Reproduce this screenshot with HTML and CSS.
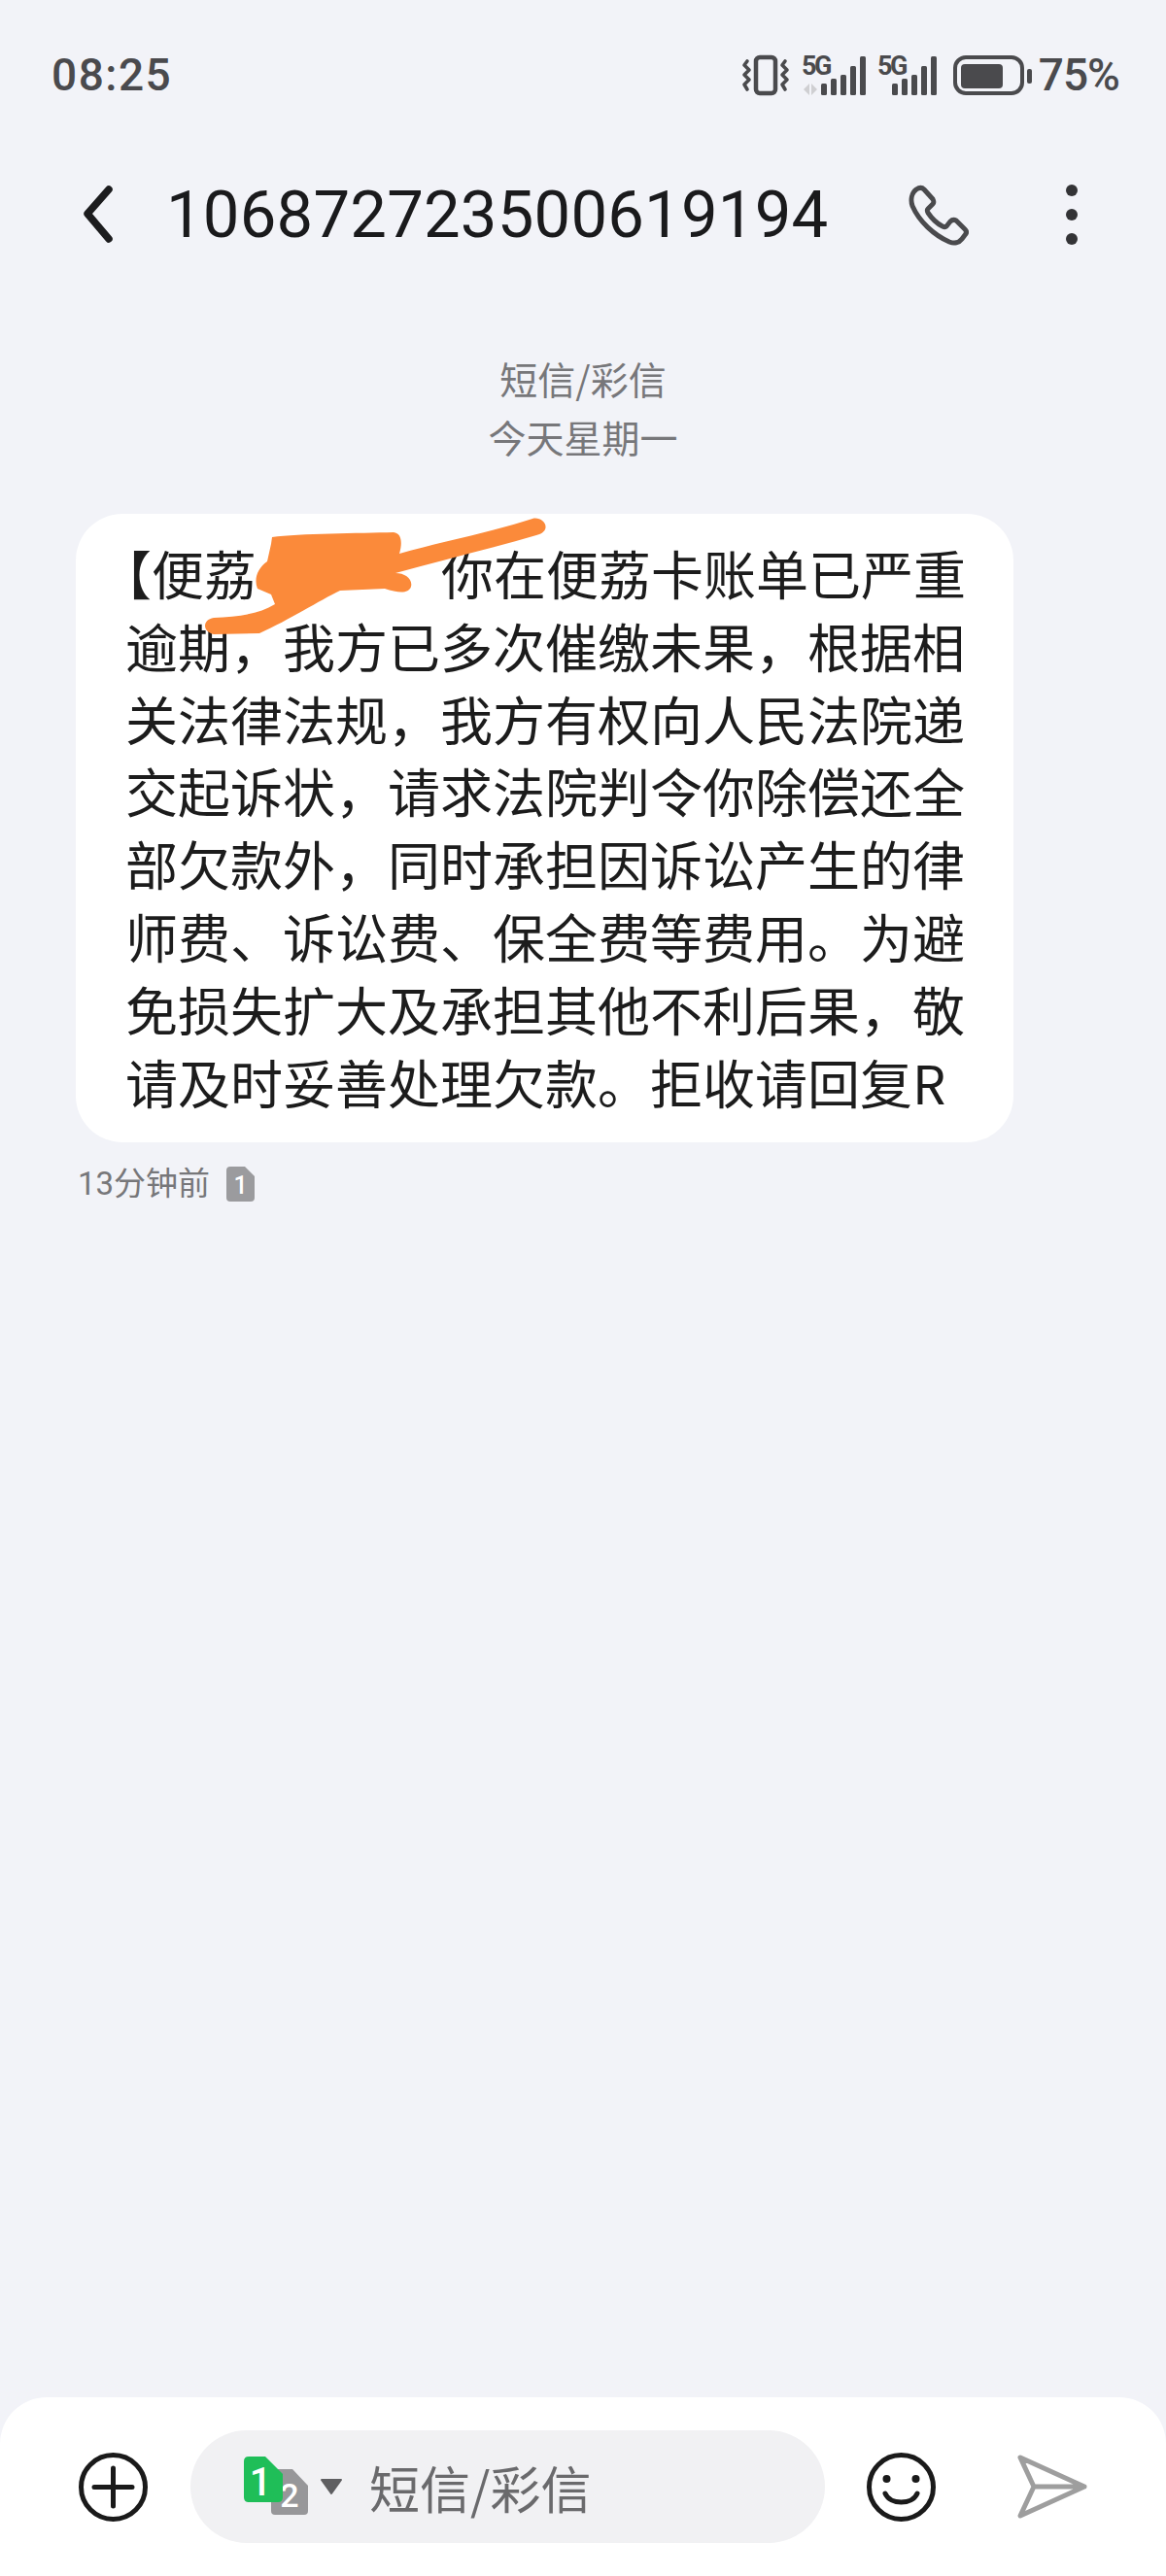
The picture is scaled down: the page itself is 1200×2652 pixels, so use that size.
FILE: index.html
```html
<!DOCTYPE html>
<html lang="zh-CN">
<head>
    <meta charset="UTF-8">
    <meta name="viewport" content="width=device-width, initial-scale=1.0">
    <title>短信</title>
    <link rel="stylesheet" href="styles.css">
</head>
<body>

    <!-- Status bar -->
    <div class="status-bar">
        <span class="clock">08:25</span>
        <div class="status-icons">
            <svg class="ic-vibrate" width="49" height="41" viewBox="0 0 49 41" fill="none" stroke="#4a4a4d" stroke-linecap="round" stroke-linejoin="round">
                <rect x="14" y="2" width="20" height="37" rx="4" stroke-width="4.5"/>
                <path d="M5 6 L2 10 L7 15 L2 20 L7 25 L2 30 L5 35" stroke-width="3.6"/>
                <path d="M44 6 L41 10 L46 15 L41 20 L46 25 L41 30 L44 35" stroke-width="3.6"/>
            </svg>
            <svg class="ic-signal" width="66" height="41" viewBox="0 0 66 41">
                <text class="net-label" x="0" y="20">5G</text>
                <path d="M8 29 L2 35 L8 41 Z M10 29 L16 35 L10 41 Z" fill="#cfcfd2"/>
                <rect x="20" y="29" width="6" height="12" rx="1.5" fill="#4a4a4d"/>
                <rect x="30" y="24" width="6" height="17" rx="1.5" fill="#4a4a4d"/>
                <rect x="40" y="20" width="6" height="21" rx="1.5" fill="#4a4a4d"/>
                <rect x="50" y="11" width="6" height="30" rx="1.5" fill="#4a4a4d"/>
                <rect x="60" y="1" width="6" height="40" rx="1.5" fill="#4a4a4d"/>
            </svg>
            <svg class="ic-signal-2" width="62" height="41" viewBox="0 0 62 41">
                <text class="net-label" x="0" y="20">5G</text>
                <rect x="15" y="29" width="6" height="12" rx="1.5" fill="#4a4a4d"/>
                <rect x="25" y="24" width="6" height="17" rx="1.5" fill="#4a4a4d"/>
                <rect x="35" y="20" width="6" height="21" rx="1.5" fill="#4a4a4d"/>
                <rect x="45" y="11" width="6" height="30" rx="1.5" fill="#4a4a4d"/>
                <rect x="55" y="1" width="6" height="40" rx="1.5" fill="#4a4a4d"/>
            </svg>
            <svg class="ic-battery" width="81" height="41" viewBox="0 0 81 41">
                <rect x="2" y="2" width="69" height="37" rx="11" fill="none" stroke="#4a4a4d" stroke-width="4"/>
                <rect x="8" y="9" width="43" height="25" rx="4" fill="#4a4a4d"/>
                <rect x="76" y="14" width="5" height="15" rx="2" fill="#4a4a4d"/>
            </svg>
            <span class="battery-text">75%</span>
        </div>
    </div>

    <!-- Header -->
    <div class="header">
        <svg class="back" width="34" height="60" viewBox="0 0 34 60" fill="none" stroke="#1c1c1e" stroke-width="7.5" stroke-linecap="round" stroke-linejoin="round">
            <path d="M28 4 L6 29 L28 55"/>
        </svg>
        <h1 class="title">106872723500619194</h1>
        <svg class="phone" width="62" height="63" viewBox="0 0 62 63" fill="none" stroke="#4a4a4d" stroke-width="5" stroke-linejoin="round">
            <path d="M8 5 C11 3 14 3 16 5 L25 15 C26 17 26 19 25 20 L20 25 C19 26 19 27 20 29 C24 35 29 40 35 43 C37 44 38 44 39 43 L43 38 C45 36 47 36 49 37 L58 46 C60 48 60 50 58 52 L55 56 C52 60 47 61 42 59 C26 52 11 38 4 22 C2 16 3 9 8 5 Z"/>
        </svg>
        <div class="more">
            <span class="dot"></span>
            <span class="dot"></span>
            <span class="dot"></span>
        </div>
    </div>

    <!-- Thread -->
    <div class="thread-label">
        <div>短信/彩信</div>
        <div>今天星期一</div>
    </div>

    <div class="bubble">
        <p class="bubble-text"><span class="open-bracket">【</span>便荔<span class="covered"></span><span>你在便荔卡账单已严重</span><span>逾期，我方已多次催缴未果，根据相关法律法规，我方有权向人民法院递交起诉状，请求法院判令你除偿还全部欠款外，同时承担因诉讼产生的律师费、诉讼费、保全费等费用。为避免损失扩大及承担其他不利后果，敬请及时妥善处理欠款。拒收请回复R</span></p>
        <!-- orange scribble over the sender name -->
        <svg class="scribble" width="390" height="130" viewBox="190 530 390 130">
            <path d="M280 553 C308 549 370 549 405 548 C414 549 414 560 411 570 C453 558 505 548 548 534 C559 531 570 546 552 551 C505 565 453 577 407 590 C417 590 425 596 423 604 C420 612 409 610 396 606 L350 608 C329 618 298 638 267 652 L220 653 C208 650 208 638 220 636 C246 635 267 632 283 622 L279 612 L265 606 C261 596 265 585 275 578 L279 560 Z" fill="#fb8a3a"/>
        </svg>
    </div>

    <div class="meta">
        <span>13分钟前</span>
        <svg width="29" height="36" viewBox="0 0 29 36">
            <path d="M4 0 H19 L29 10 V32 Q29 36 25 36 H4 Q0 36 0 32 V4 Q0 0 4 0 Z" fill="#9b9b9e"/>
            <text class="sim-num" x="14.5" y="28" font-size="25">1</text>
        </svg>
    </div>

    <div class="spacer"></div>

    <!-- Composer -->
    <div class="composer">
        <svg class="add" width="71" height="71" viewBox="0 0 71 71" fill="none" stroke="#1a1a1a" stroke-linecap="round">
            <circle cx="35.5" cy="35.5" r="33" stroke-width="5"/>
            <path d="M35.5 16 V55 M16 35.5 H55" stroke-width="5"/>
        </svg>
        <div class="input">
            <svg class="sim" width="66" height="60" viewBox="0 0 66 60">
                <path d="M28 13 H50 L66 30 V56 Q66 60 62 60 H32 Q28 60 28 56 Z" fill="#979799"/>
                <text class="sim-num" x="47" y="52" font-size="34">2</text>
                <path d="M5 0 H22 L40 18 V42 Q40 47 35 47 H5 Q0 47 0 42 V5 Q0 0 5 0 Z" fill="#1fbe58"/>
                <text class="sim-num" x="17" y="40" font-size="40">1</text>
            </svg>
            <svg class="caret" width="24" height="18" viewBox="0 0 24 18">
                <path d="M2 2 H22 L12 16 Z" fill="#5f5f61" stroke="#5f5f61" stroke-width="2" stroke-linejoin="round"/>
            </svg>
            <span class="placeholder">短信/彩信</span>
        </div>
        <svg class="emoji" width="71" height="71" viewBox="0 0 71 71" fill="none" stroke="#1a1a1a" stroke-linecap="round">
            <circle cx="35.5" cy="35.5" r="33" stroke-width="5"/>
            <circle cx="20.5" cy="27" r="4" fill="#1a1a1a" stroke="none"/>
            <circle cx="50.5" cy="27" r="4" fill="#1a1a1a" stroke="none"/>
            <path d="M19 42 C24 54 47 54 52 42" stroke-width="5"/>
        </svg>
        <svg class="send" width="72" height="66" viewBox="0 0 72 66" fill="none" stroke="#9e9e9e" stroke-width="5" stroke-linecap="round" stroke-linejoin="round">
            <path d="M3 3 L69 33 L3 63 L17 33 Z M17 33 H69"/>
        </svg>
    </div>

</body>
</html>
```

FILE: styles.css
```css
body {
    margin: 0;
    height: 2652px;
    display: flex;
    flex-direction: column;
    background-color: #f2f3f8;
    font-family: Roboto, "Noto Sans CJK SC", sans-serif;
    overflow: hidden;
}

/* Status bar */
.status-bar {
    height: 154px;
    padding: 0 48px 0 53px;
    display: flex;
    align-items: center;
    justify-content: space-between;
    color: #4a4a4d;
}

.clock {
    font-size: 46px;
    font-weight: 500;
    letter-spacing: 1.5px;
}

.status-icons {
    display: flex;
    align-items: center;
    gap: 12px;
}

.status-icons svg {
    overflow: visible;
}

.ic-battery {
    margin-left: 4px;
}

.battery-text {
    margin-left: -5px;
    font-size: 46px;
    font-weight: 500;
    letter-spacing: -1px;
}

.net-label {
    font-family: Roboto, sans-serif;
    font-size: 27px;
    font-weight: 700;
    letter-spacing: -2.5px;
    fill: #4a4a4d;
}

/* Header */
.header {
    height: 134px;
    padding-left: 84px;
    display: flex;
    align-items: center;
}

.title {
    flex: 1;
    margin: 0 0 0 53px;
    font-size: 67px;
    font-weight: 400;
    letter-spacing: 0.2px;
    color: #1a1a1c;
}

.phone {
    margin-right: 96px;
}

.more {
    width: 20px;
    margin-right: 87px;
    display: flex;
    flex-direction: column;
    align-items: center;
    gap: 13px;
}

.dot {
    width: 12px;
    height: 12px;
    border-radius: 50%;
    background-color: #333336;
}

/* Thread */
.thread-label {
    padding-top: 71px;
    font-family: "Noto Sans CJK SC", sans-serif;
    font-size: 39px;
    line-height: 60px;
    text-align: center;
    color: #77777a;
}

.bubble {
    position: relative;
    width: 965px;
    margin: 50px 0 0 78px;
    padding: 24px 44px 25px 51px;
    box-sizing: border-box;
    background-color: #fff;
    border-radius: 48px;
}

.bubble-text {
    margin: 0;
    font-family: "Noto Sans CJK SC", sans-serif;
    font-size: 54px;
    line-height: 74.8px;
    color: #1c1c1c;
}

.open-bracket {
    margin-left: -0.5em;
}

.covered {
    display: inline-block;
    width: 190px;
}

.scribble {
    position: absolute;
    left: 112px;
    top: 1px;
}

.meta {
    margin: 25px 0 0 80px;
    display: flex;
    align-items: center;
    gap: 17px;
    font-family: Roboto, "Noto Sans CJK SC", sans-serif;
    font-size: 33px;
    line-height: 36px;
    color: #77777a;
}

.sim-num {
    font-family: Roboto, sans-serif;
    font-weight: 500;
    text-anchor: middle;
    fill: #fff;
}

.spacer {
    flex: 1;
}

/* Composer */
.composer {
    height: 184px;
    padding: 34px 0 34px 81px;
    box-sizing: border-box;
    display: flex;
    align-items: center;
    background-color: #fff;
    border-radius: 48px 48px 0 0;
}

.input {
    width: 653px;
    height: 116px;
    margin-left: 44px;
    padding-left: 55px;
    box-sizing: border-box;
    display: flex;
    align-items: center;
    background-color: #f1f1f3;
    border-radius: 58px;
}

.sim {
    margin-top: -2px;
}

.caret {
    margin: 0 27px 0 12px;
}

.placeholder {
    font-family: "Noto Sans CJK SC", sans-serif;
    font-size: 52px;
    color: #6a6a6c;
}

.emoji {
    margin-left: 43px;
}

.send {
    margin-left: 84px;
}
```
